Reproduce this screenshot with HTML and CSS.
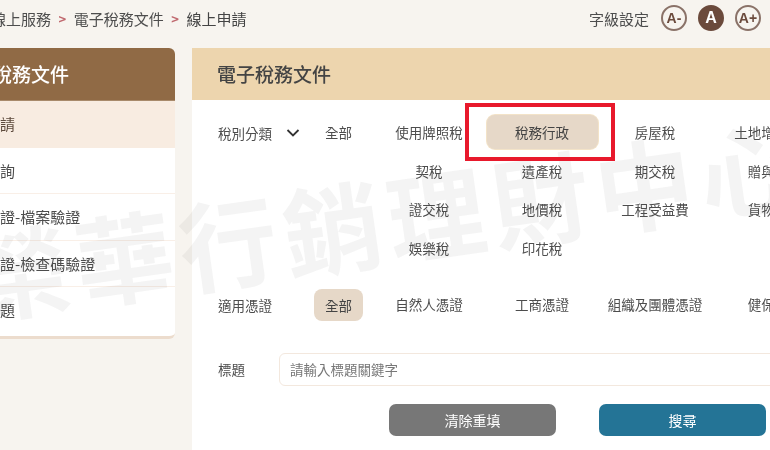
FILE: index.html
```html
<!DOCTYPE html>
<html lang="zh-Hant">
<head>
    <meta charset="UTF-8">
    <meta name="viewport" content="width=device-width, initial-scale=1.0">
    <title>電子稅務文件</title>
    <link rel="stylesheet" href="styles.css">
</head>
<body>
    <div class="page">
        <header class="topbar">
            <nav class="crumbs">
                <a href="#">線上服務</a><span class="sep">&gt;</span>
                <a href="#">電子稅務文件</a><span class="sep">&gt;</span>
                <a href="#" class="now">線上申請</a>
            </nav>
            <div class="fontsize">
                <span class="fontsize-label">字級設定</span>
                <button class="size-btn">A-</button>
                <button class="size-btn on">A</button>
                <button class="size-btn">A+</button>
            </div>
        </header>
        <div class="wrap">
            <aside class="side">
                <h2 class="side-title">電子稅務文件</h2>
                <ul class="side-menu">
                    <li class="on"><a href="#">線上申請</a></li>
                    <li><a href="#">線上查詢</a></li>
                    <li><a href="#">電子驗證-檔案驗證</a></li>
                    <li><a href="#">電子驗證-檢查碼驗證</a></li>
                    <li><a href="#">常見問題</a></li>
                </ul>
            </aside>
            <main class="panel">
                <h1 class="panel-title">電子稅務文件</h1>
                <form class="panel-body">
                    <div class="filter">
                        <div class="filter-head">
                            <span class="filter-label">稅別分類</span>
                            <svg class="chevron" viewBox="0 0 14 10" width="14" height="10"><path d="M1.5 2 7 7.5 12.5 2" fill="none" stroke="#333" stroke-width="1.8"/></svg>
                        </div>
                        <a href="#" class="opt opt-all">全部</a>
                        <div class="opts">
                            <a href="#" class="opt">使用牌照稅</a>
                            <a href="#" class="opt on">稅務行政</a>
                            <a href="#" class="opt">房屋稅</a>
                            <a href="#" class="opt">土地增值稅</a>
                            <a href="#" class="opt">契稅</a>
                            <a href="#" class="opt">遺產稅</a>
                            <a href="#" class="opt">期交稅</a>
                            <a href="#" class="opt">贈與稅</a>
                            <a href="#" class="opt">證交稅</a>
                            <a href="#" class="opt">地價稅</a>
                            <a href="#" class="opt">工程受益費</a>
                            <a href="#" class="opt">貨物稅</a>
                            <a href="#" class="opt">娛樂稅</a>
                            <a href="#" class="opt">印花稅</a>
                        </div>
                    </div>
                    <div class="filter filter-cert">
                        <div class="filter-head">
                            <span class="filter-label">適用憑證</span>
                        </div>
                        <a href="#" class="opt opt-all on">全部</a>
                        <div class="opts">
                            <a href="#" class="opt">自然人憑證</a>
                            <a href="#" class="opt">工商憑證</a>
                            <a href="#" class="opt">組織及團體憑證</a>
                            <a href="#" class="opt">健保卡</a>
                        </div>
                    </div>
                    <div class="field">
                        <label class="filter-label" for="kw">標題</label>
                        <input id="kw" class="field-input" type="text" placeholder="請輸入標題關鍵字">
                    </div>
                    <div class="actions">
                        <button type="button" class="btn btn-reset">清除重填</button>
                        <button type="button" class="btn btn-search">搜尋</button>
                    </div>
                </form>
            </main>
        </div>
    </div>
    <!-- 浮水印 -->
    <div class="watermark">榮華行銷理財中心</div>
    <!-- 紅框標示 -->
    <div class="mark"></div>
</body>
</html>
```

FILE: styles.css
```css
* {box-sizing: border-box;}
html, body {margin: 0; padding: 0;}
h1, h2, ul {margin: 0; padding: 0;}
li {list-style: none;}
a {text-decoration: none; color: inherit;}
body {
    overflow: hidden;
    height: 450px;
    background: #f7f4ef;
    color: #4d4d4d;
    font-family: "Noto Sans CJK TC", "Noto Sans", sans-serif;
}
.page {filter: blur(0.5px);}

/* top */
.topbar {display: flex; justify-content: space-between; align-items: center;
    height: 36px; padding-right: 9px;}
.crumbs {display: flex; align-items: center; margin-left: -9px; font-size: 15px;}
.crumbs .sep {margin: 0 7.5px; color: #c0696f; font-size: 13px; font-weight: 700;}
.crumbs .now {color: #444;}
.fontsize {display: flex; align-items: center; gap: 11px;}
.fontsize-label {margin-right: 1px; font-size: 15px;}
.size-btn {width: 26px; height: 26px; padding: 0;
    background: #fff0; color: #6b4a3c;
    border: 2px solid #8a7268; border-radius: 50%;
    font: 700 14px "Liberation Sans", sans-serif;}
.size-btn.on {background: #6b4a3c; border-color: #6b4a3c; color: #fff; font-size: 16px;}

/* layout */
.wrap {display: flex; align-items: flex-start; gap: 17px;
    margin-top: 12px; margin-left: -70px;}

/* side */
.side {flex: none; width: 245px; background: #fff; border-radius: 6px;
    border-bottom: 3px solid #ecdccd;}
.side-title {height: 53px; padding-left: 25px;
    background: #906a45; color: #fff; border-radius: 6px 6px 0 0;
    border-bottom: 1px solid #a88a6b;
    font-size: 19px; font-weight: 500; line-height: 52px;}
.side-menu li {height: 46.5px; padding-left: 25px;
    border-bottom: 1px solid #f9efe7;
    font-size: 15px; line-height: 45px;}
.side-menu li:last-child {border-bottom: 0; height: 49px;}
.side-menu li.on {background: #f8ece1; border-bottom: 0; color: #5d4a3c;}

/* panel */
.panel {flex: none; width: 771px; min-height: 402px; background: #fff;}
.panel-title {height: 52px; padding-left: 25px;
    background: #edd5ae; color: #444;
    font-size: 19px; font-weight: 500; line-height: 52px;}
.panel-body {padding: 14px 26px 0;}
.filter {display: flex; align-items: flex-start;}
.filter-cert {margin-top: 17px;}
.filter-head {display: flex; align-items: center; justify-content: space-between;
    width: 96px; height: 38px; padding-right: 14px;}
.filter-label {color: #4d4d4d; font-size: 13.5px;}
.opts {display: grid; grid-template-columns: repeat(4, 113px); grid-auto-rows: 38.5px;
    margin-left: 9.5px; margin-top: 1px;}
.opts .opt {margin-top: 0;}
.opt {display: flex; align-items: center; justify-content: center;
    height: 34px; margin-top: 1px;
    border-radius: 8px; font-size: 13.5px; white-space: nowrap;}
.opt-all {flex: none; width: 49px;}
.opt.on {background: #e6d8c8; color: #444;}
.opts .opt.on {box-shadow: 0 0 0 1px #f3e3c8; width: 111px; justify-self: center;}
.filter-cert .opt {height: 32px; margin-top: 3px;}
.filter-cert .opts {margin-top: 1px;}
.filter-cert .opts .opt {margin-top: 1px;}

/* input */
.field {display: flex; align-items: center; margin-top: 27px;}
.field .filter-label {flex: none; width: 61px;}
.field-input {flex: 1; min-width: 0; height: 33px; padding: 0 10px;
    background: #fff; border: 1px solid #f3e8de; border-radius: 6px;
    font: 13.5px "Noto Sans CJK TC", sans-serif;}
.field-input::placeholder {color: #777;}

/* buttons */
.actions {display: flex; justify-content: center; gap: 43px; margin-top: 18px;}
.btn {width: 167px; height: 32px; padding: 0; border: 0; border-radius: 7px;
    color: #fff; font: 14px "Noto Sans CJK TC", sans-serif;}
.btn-reset {background: #777;}
.btn-search {background: #247496;}

/* overlay */
.watermark {position: absolute; top: 226px; left: -29px;
    color: rgba(60, 60, 60, 0.06);
    font-size: 98px; font-weight: 700; letter-spacing: 7px; line-height: 1;
    white-space: nowrap; transform: rotate(-8deg); transform-origin: 0 50%;
    pointer-events: none;}
.mark {position: absolute; top: 103px; left: 465px; width: 150px; height: 58px;
    border: 4px solid #e8192c;}
```
